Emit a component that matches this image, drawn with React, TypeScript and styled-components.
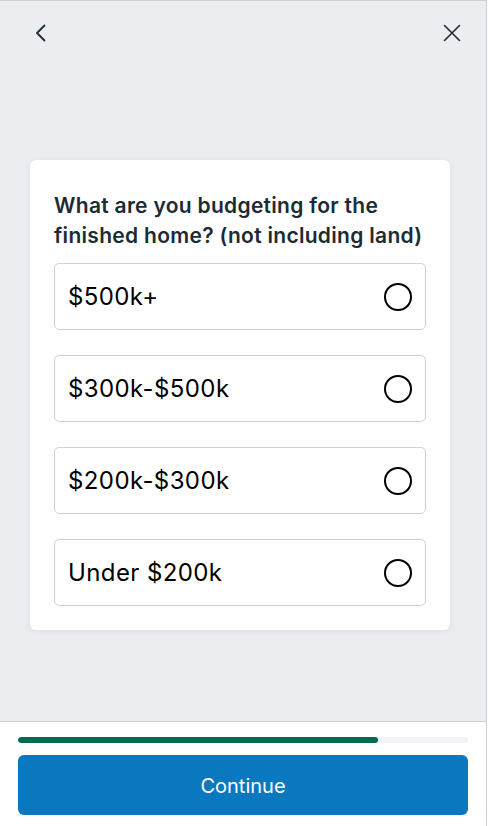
import React, { useState } from 'react'
import styled, { createGlobalStyle } from 'styled-components'

const GlobalStyle = createGlobalStyle`
  html, body {
    margin: 0;
    padding: 0;
    background: #ffffff;
  }
  * {
    box-sizing: border-box;
  }
`

const options = ['$500k+', '$300k-$500k', '$200k-$300k', 'Under $200k']

const App: React.FC = () => {
  const [selected, setSelected] = useState<number | null>(null)
  const progress = 80

  return (
    <Page>
      <GlobalStyle />
      <Body>
        <Header>
          <IconButton aria-label="Back">
            <svg width="24" height="24" viewBox="0 0 24 24" fill="none">
              <path d="M15.5 4.5L8 12l7.5 7.5" stroke="#1c2b33" strokeWidth="1.8" strokeLinecap="round" strokeLinejoin="round" />
            </svg>
          </IconButton>
          <IconButton aria-label="Close">
            <svg width="24" height="24" viewBox="0 0 24 24" fill="none">
              <path d="M4.5 4.5l15 15M19.5 4.5l-15 15" stroke="#1c2b33" strokeWidth="1.6" strokeLinecap="round" />
            </svg>
          </IconButton>
        </Header>
        <Main>
          <Card>
            <Question>What are you budgeting for the finished home? (not including land)</Question>
            <OptionList>
              {options.map((o, i) => (
                <Option key={o} onClick={() => setSelected(i)}>
                  <OptionLabel>{o}</OptionLabel>
                  <Radio $checked={selected === i} />
                </Option>
              ))}
            </OptionList>
          </Card>
        </Main>
      </Body>
      <Footer>
        <Track>
          <Fill style={{ width: `${progress}%` }} />
        </Track>
        <ContinueButton>Continue</ContinueButton>
      </Footer>
    </Page>
  )
}

const Page = styled.div`
  width: 487px;
  height: 826px;
  display: flex;
  flex-direction: column;
  border-top: 1px solid #ccd0d5;
  border-right: 1px solid #ccd0d5;
  font-family: Inter, 'Noto Sans', sans-serif;
  color: #1c2b33;
`

const Body = styled.div`
  flex: 1;
  display: flex;
  flex-direction: column;
  background: #ebedf0;
`

const Header = styled.div`
  display: flex;
  justify-content: space-between;
  align-items: flex-start;
  padding: 20px 22px 0 29px;
  height: 64px;
`

const IconButton = styled.button`
  background: none;
  border: 0;
  margin: 0;
  padding: 0;
  width: 24px;
  height: 24px;
  display: flex;
  align-items: center;
  justify-content: center;
  cursor: pointer;
`

const Main = styled.div`
  flex: 1;
  padding: 95px 36px 0 30px;
`

const Card = styled.div`
  background: #ffffff;
  border-radius: 6px;
  box-shadow: 0 1px 6px rgba(0, 0, 0, 0.08);
  padding: 31px 24px 24px;
`

const Question = styled.h2`
  margin: 0 0 12px;
  font-size: 21px;
  line-height: 30px;
  font-weight: 600;
  color: #1c2b33;
  letter-spacing: 0.3px;
`

const OptionList = styled.div`
  display: flex;
  flex-direction: column;
  gap: 25px;
`

const Option = styled.div`
  height: 67px;
  display: flex;
  align-items: center;
  justify-content: space-between;
  padding: 0 13px 0 13px;
  border: 1px solid #cbd2d9;
  border-radius: 5px;
  cursor: pointer;
`

const OptionLabel = styled.span`
  font-size: 24px;
  font-weight: 400;
  letter-spacing: 0.4px;
  color: #000000;
`

const Radio = styled.span<{ $checked: boolean }>`
  width: 28px;
  height: 28px;
  border-radius: 50%;
  border: 2.5px solid #000000;
  background: ${(p) => (p.$checked ? '#0a78be' : 'transparent')};
`

const Footer = styled.div`
  background: #ffffff;
  border-top: 1px solid #ccd0d5;
  padding: 15px 18px 11px;
  display: flex;
  flex-direction: column;
  gap: 12px;
`

const Track = styled.div`
  height: 6px;
  border-radius: 3px;
  background: #f1f3f6;
  overflow: hidden;
`

const Fill = styled.div`
  height: 100%;
  border-radius: 3px;
  background: #006b4e;
`

const ContinueButton = styled.button`
  height: 60px;
  border: 0;
  border-radius: 6px;
  background: #0a78be;
  color: #ffffff;
  font-family: Inter, 'Noto Sans', sans-serif;
  font-size: 20px;
  padding-top: 3px;
  cursor: pointer;
`

export default App
